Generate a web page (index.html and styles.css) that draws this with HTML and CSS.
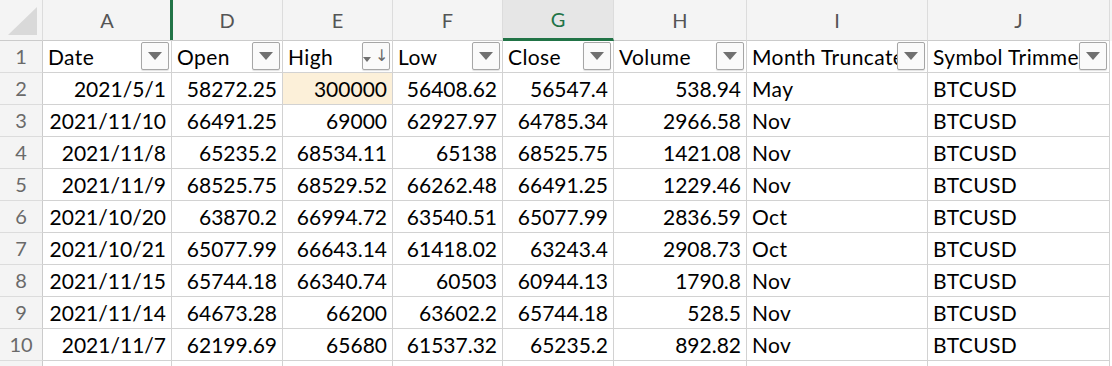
FILE: index.html
```html
<!DOCTYPE html>
<html lang="en">
<head>
    <meta charset="UTF-8">
    <title>Sheet</title>
    <link rel="stylesheet" href="styles.css">
</head>
<body>
    <div class="sheet">
        <div class="row head">
            <div class="cell corner"><span class="tri"></span></div>
            <div class="cell col hidden-after">A</div>
            <div class="cell col">D</div>
            <div class="cell col">E</div>
            <div class="cell col">F</div>
            <div class="cell col selected">G</div>
            <div class="cell col">H</div>
            <div class="cell col">I</div>
            <div class="cell col">J</div>
        </div>

        <div class="row titles">
            <div class="cell num">1</div>
            <div class="cell txt">Date<span class="filter"><i class="arrow"></i></span></div>
            <div class="cell txt">Open<span class="filter"><i class="arrow"></i></span></div>
            <div class="cell txt">High<span class="filter sorted"><i class="arrow small"></i><b class="down">↓</b></span></div>
            <div class="cell txt">Low<span class="filter"><i class="arrow"></i></span></div>
            <div class="cell txt">Close<span class="filter"><i class="arrow"></i></span></div>
            <div class="cell txt">Volume<span class="filter"><i class="arrow"></i></span></div>
            <div class="cell txt">Month Truncated<span class="filter"><i class="arrow"></i></span></div>
            <div class="cell txt">Symbol Trimmed<span class="filter"><i class="arrow"></i></span></div>
        </div>

        <div class="row">
            <div class="cell num">2</div>
            <div class="cell val">2021/5/1</div>
            <div class="cell val">58272.25</div>
            <div class="cell val flag">300000</div>
            <div class="cell val">56408.62</div>
            <div class="cell val">56547.4</div>
            <div class="cell val">538.94</div>
            <div class="cell txt">May</div>
            <div class="cell txt">BTCUSD</div>
        </div>
        <div class="row">
            <div class="cell num">3</div>
            <div class="cell val">2021/11/10</div>
            <div class="cell val">66491.25</div>
            <div class="cell val">69000</div>
            <div class="cell val">62927.97</div>
            <div class="cell val">64785.34</div>
            <div class="cell val">2966.58</div>
            <div class="cell txt">Nov</div>
            <div class="cell txt">BTCUSD</div>
        </div>
        <div class="row">
            <div class="cell num">4</div>
            <div class="cell val">2021/11/8</div>
            <div class="cell val">65235.2</div>
            <div class="cell val">68534.11</div>
            <div class="cell val">65138</div>
            <div class="cell val">68525.75</div>
            <div class="cell val">1421.08</div>
            <div class="cell txt">Nov</div>
            <div class="cell txt">BTCUSD</div>
        </div>
        <div class="row">
            <div class="cell num">5</div>
            <div class="cell val">2021/11/9</div>
            <div class="cell val">68525.75</div>
            <div class="cell val">68529.52</div>
            <div class="cell val">66262.48</div>
            <div class="cell val">66491.25</div>
            <div class="cell val">1229.46</div>
            <div class="cell txt">Nov</div>
            <div class="cell txt">BTCUSD</div>
        </div>
        <div class="row">
            <div class="cell num">6</div>
            <div class="cell val">2021/10/20</div>
            <div class="cell val">63870.2</div>
            <div class="cell val">66994.72</div>
            <div class="cell val">63540.51</div>
            <div class="cell val">65077.99</div>
            <div class="cell val">2836.59</div>
            <div class="cell txt">Oct</div>
            <div class="cell txt">BTCUSD</div>
        </div>
        <div class="row">
            <div class="cell num">7</div>
            <div class="cell val">2021/10/21</div>
            <div class="cell val">65077.99</div>
            <div class="cell val">66643.14</div>
            <div class="cell val">61418.02</div>
            <div class="cell val">63243.4</div>
            <div class="cell val">2908.73</div>
            <div class="cell txt">Oct</div>
            <div class="cell txt">BTCUSD</div>
        </div>
        <div class="row">
            <div class="cell num">8</div>
            <div class="cell val">2021/11/15</div>
            <div class="cell val">65744.18</div>
            <div class="cell val">66340.74</div>
            <div class="cell val">60503</div>
            <div class="cell val">60944.13</div>
            <div class="cell val">1790.8</div>
            <div class="cell txt">Nov</div>
            <div class="cell txt">BTCUSD</div>
        </div>
        <div class="row">
            <div class="cell num">9</div>
            <div class="cell val">2021/11/14</div>
            <div class="cell val">64673.28</div>
            <div class="cell val">66200</div>
            <div class="cell val">63602.2</div>
            <div class="cell val">65744.18</div>
            <div class="cell val">528.5</div>
            <div class="cell txt">Nov</div>
            <div class="cell txt">BTCUSD</div>
        </div>
        <div class="row">
            <div class="cell num">10</div>
            <div class="cell val">2021/11/7</div>
            <div class="cell val">62199.69</div>
            <div class="cell val">65680</div>
            <div class="cell val">61537.32</div>
            <div class="cell val">65235.2</div>
            <div class="cell val">892.82</div>
            <div class="cell txt">Nov</div>
            <div class="cell txt">BTCUSD</div>
        </div>
        <div class="row">
            <div class="cell num"></div>
            <div class="cell"></div>
            <div class="cell"></div>
            <div class="cell"></div>
            <div class="cell"></div>
            <div class="cell"></div>
            <div class="cell"></div>
            <div class="cell"></div>
            <div class="cell"></div>
        </div>
    </div>
</body>
</html>
```

FILE: styles.css
```css
* {
    box-sizing: border-box;
}

body {
    margin: 0;
    background: #fff;
    font-family: 'Lato', 'Liberation Sans', sans-serif;
    color: #000;
    overflow: hidden;
}

.sheet {
    width: 1112px;
    height: 366px;
    overflow: hidden;
}

.row {
    display: grid;
    grid-template-columns: 43px 129px 111px 110px 110px 111px 133px 181px 182px;
    height: 32px;
}

.cell {
    position: relative;
    border-right: 1px solid #d2d2d2;
    border-bottom: 1px solid #d2d2d2;
    font-size: 21px;
    line-height: 31px;
    white-space: nowrap;
    overflow: hidden;
}

/* column letters */
.head {
    height: 41px;
    background: #f4f4f4;
}

.head .cell {
    line-height: 40px;
    text-align: center;
    color: #555;
    font-size: 20px;
    border-right-color: #dcdcdc;
    border-bottom-color: #cbcbcb;
    overflow: visible;
}

.head .selected {
    background: #e6e6e6;
    color: #217346;
    border-bottom: 3px solid #217346;
    line-height: 38px;
}

.hidden-after::after {
    content: "";
    position: absolute;
    top: 0;
    right: -2px;
    width: 3px;
    height: 40px;
    background: #217346;
    z-index: 2;
}

.corner .tri {
    position: absolute;
    left: 8px;
    top: 7px;
    width: 29px;
    height: 28px;
    background: #d9d9d9;
    clip-path: polygon(100% 0, 100% 100%, 0 100%);
}

/* row numbers */
.num {
    background: #f4f4f4;
    color: #6a6a6a;
    text-align: center;
    font-size: 20px;
    border-right-color: #cbcbcb;
    border-bottom-color: #dcdcdc;
}

.txt {
    padding-left: 5px;
    letter-spacing: 0.4px;
}

.val {
    text-align: right;
    padding-right: 5px;
}

.flag {
    background: #fcf0d9;
}

/* filter buttons on the header row */
.filter {
    position: absolute;
    right: 2px;
    top: 1px;
    width: 28px;
    height: 28px;
    background: #fafafa;
    border: 1px solid #a6a6a6;
    border-radius: 2px;
    box-shadow: 0 1px 1px rgba(0, 0, 0, 0.12);
    display: flex;
    align-items: center;
    justify-content: center;
}

.arrow {
    width: 0;
    height: 0;
    border-left: 7px solid transparent;
    border-right: 7px solid transparent;
    border-top: 8px solid #707070;
}

.arrow.small {
    border-left-width: 4px;
    border-right-width: 4px;
    border-top-width: 5px;
    margin-top: 6px;
}

.sorted {
    gap: 4px;
}

.down {
    font-weight: normal;
    font-family: 'DejaVu Sans', sans-serif;
    font-size: 16px;
    line-height: 16px;
    color: #6a6a6a;
}
```
